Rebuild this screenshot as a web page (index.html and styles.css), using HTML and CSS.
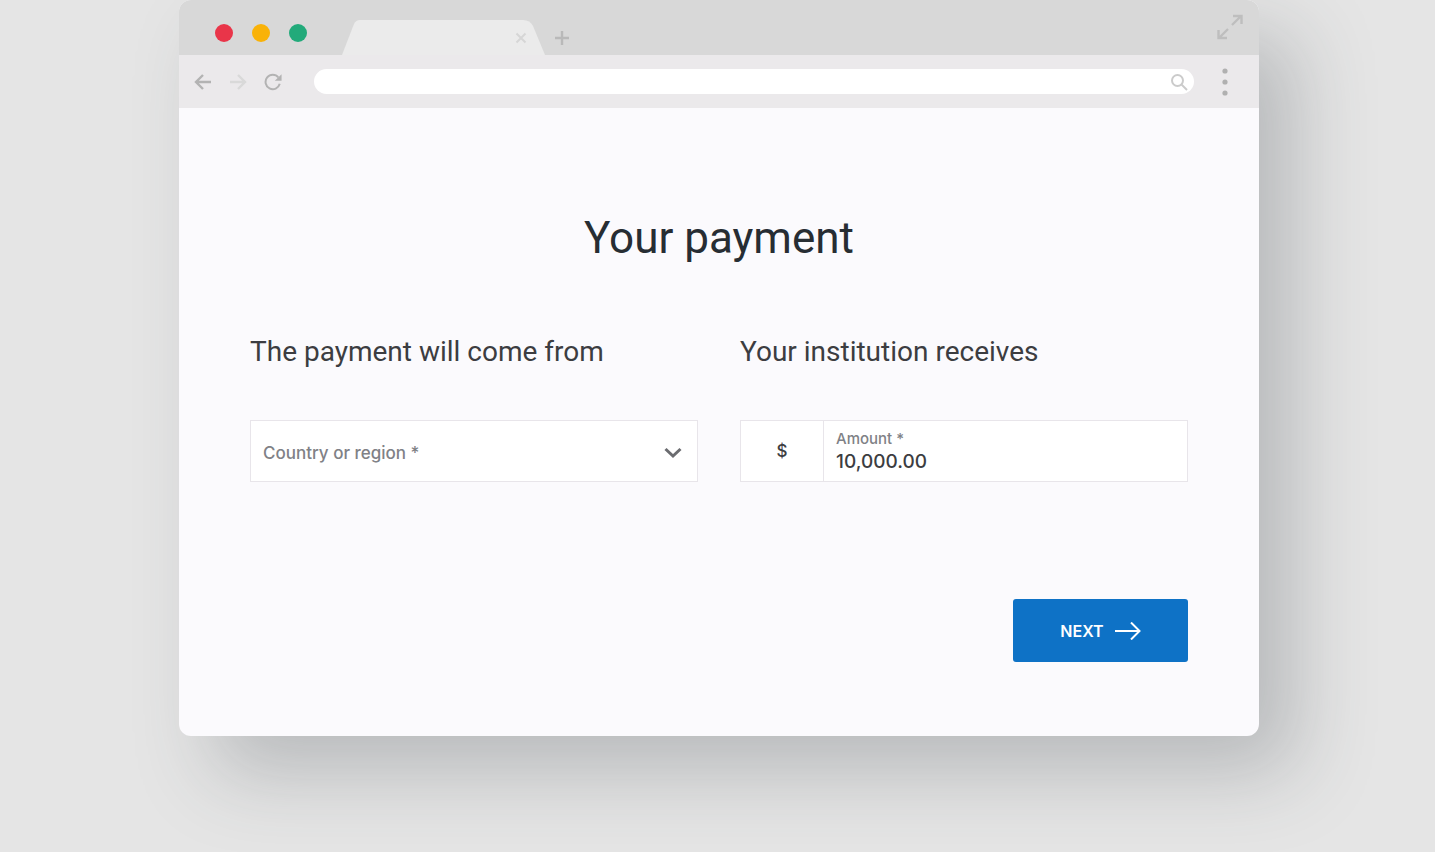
FILE: index.html
```html
<!DOCTYPE html>
<html lang="en">

<head>
    <meta charset="UTF-8">
    <meta name="viewport" content="width=device-width, initial-scale=1.0">
    <title>Your payment</title>
    <link rel="stylesheet" href="styles.css">
</head>

<body>
    <div class="browser">
        <header class="tab-bar">
            <div class="lights">
                <span class="light red"></span>
                <span class="light yellow"></span>
                <span class="light green"></span>
            </div>
            <div class="tab">
                <svg class="tab-shape" viewBox="0 0 203 35" preserveAspectRatio="none">
                    <path d="M0 35 L12 4 Q14 0 18 0 H181 Q188 0 191 6 L203 35 Z" fill="#ebebeb" />
                </svg>
                <button class="icon-btn tab-close" aria-label="Close tab">
                    <svg width="12" height="12" viewBox="0 0 12 12">
                        <path d="M1.5 1.5 L10.5 10.5 M10.5 1.5 L1.5 10.5" stroke="#d6d6d6" stroke-width="2" />
                    </svg>
                </button>
            </div>
            <button class="icon-btn new-tab" aria-label="New tab">
                <svg width="14" height="14" viewBox="0 0 14 14">
                    <path d="M7 0 V14 M0 7 H14" stroke="#b9b9b9" stroke-width="2.4" />
                </svg>
            </button>
            <button class="icon-btn expand" aria-label="Full screen">
                <svg width="26" height="26" viewBox="0 0 26 26" fill="none" stroke="#bebebe" stroke-width="2.4">
                    <path d="M15 11 L24 2 M16 2 H24.5 V10" />
                    <path d="M11 15 L2 24 M1.5 16 V24 H10" />
                </svg>
            </button>
        </header>

        <div class="toolbar">
            <div class="nav-buttons">
                <button class="icon-btn" aria-label="Back">
                    <svg width="18" height="16" viewBox="0 0 18 16" fill="none" stroke="#b3b3b3" stroke-width="2.4">
                        <path d="M17 8 H2 M9 1 L2 8 L9 15" />
                    </svg>
                </button>
                <button class="icon-btn" aria-label="Forward">
                    <svg width="18" height="16" viewBox="0 0 18 16" fill="none" stroke="#d9d9d9" stroke-width="2.4">
                        <path d="M1 8 H16 M9 1 L16 8 L9 15" />
                    </svg>
                </button>
                <button class="icon-btn" aria-label="Reload">
                    <svg width="18" height="18" viewBox="0 0 20 20">
                        <path d="M16 5 A8 8 0 1 0 17.5 12" fill="none" stroke="#b3b3b3" stroke-width="2.2" />
                        <path d="M19.5 1.5 V8.5 H12 Z" fill="#b3b3b3" />
                    </svg>
                </button>
            </div>
            <div class="address">
                <input type="text" aria-label="Address">
                <svg width="18" height="18" viewBox="0 0 18 18" fill="none" stroke="#cbcbcb" stroke-width="2">
                    <circle cx="7.5" cy="7.5" r="5.5" />
                    <path d="M11.5 11.5 L17 17" />
                </svg>
            </div>
            <button class="icon-btn menu" aria-label="Menu">
                <svg width="6" height="28" viewBox="0 0 6 28" fill="#b0b0b0">
                    <circle cx="3" cy="3" r="2.6" />
                    <circle cx="3" cy="14" r="2.6" />
                    <circle cx="3" cy="25" r="2.6" />
                </svg>
            </button>
        </div>

        <main class="content">
            <h1>Your payment</h1>
            <form>
                <div class="columns">
                    <section>
                        <h2>The payment will come from</h2>
                        <div class="field">
                            <label class="select-label" for="country">Country or region *</label>
                            <select id="country" required>
                                <option value=""></option>
                            </select>
                            <svg class="chevron" width="18" height="12" viewBox="0 0 18 12">
                                <path d="M1.5 2 L9 9 L16.5 2" fill="none" stroke="#6b6c70" stroke-width="3" />
                            </svg>
                        </div>
                    </section>
                    <section>
                        <h2>Your institution receives</h2>
                        <div class="field">
                            <span class="currency">$</span>
                            <div class="amount">
                                <label for="amount">Amount *</label>
                                <input type="text" id="amount" value="10,000.00" required>
                            </div>
                        </div>
                    </section>
                </div>
                <button class="next-btn" type="submit">
                    NEXT
                    <svg width="26" height="18" viewBox="0 0 26 18" fill="none" stroke="#fff" stroke-width="2">
                        <path d="M0 9 H24.5 M16 0.5 L24.5 9 L16 17.5" />
                    </svg>
                </button>
            </form>
        </main>
    </div>
</body>

</html>
```
FILE: styles.css
```css
* {
    margin: 0;
    padding: 0;
    box-sizing: border-box;
}

body {
    font-family: Roboto, "Liberation Sans", sans-serif;
    background: #e5e5e5;
    color: #3c3d41;
    padding: 0 176px 116px 179px;
}

button,
input,
select {
    font-family: inherit;
    border: none;
    background: none;
    outline: none;
}

svg {
    display: block;
}

/* browser window */
.browser {
    border-radius: 12px;
    background: #fbfafd;
    box-shadow: 36px 36px 80px rgba(54, 62, 68, 0.26);
}

.tab-bar {
    display: flex;
    align-items: flex-end;
    height: 55px;
    padding: 0 16px 0 36px;
    background: #d8d8d8;
    border-radius: 12px 12px 0 0;
}

.lights {
    display: flex;
    gap: 19px;
    margin-right: 35px;
    padding-bottom: 13px;
}

.light {
    width: 18px;
    height: 18px;
    border-radius: 50%;
}

.red {
    background: #e93549;
}

.yellow {
    background: #f9b208;
}

.green {
    background: #22aa7a;
}

.tab {
    position: relative;
    display: flex;
    align-items: center;
    justify-content: flex-end;
    width: 203px;
    height: 35px;
    padding-right: 18px;
}

.tab-shape {
    position: absolute;
    top: 0;
    left: 0;
    width: 100%;
    height: 100%;
}

.icon-btn {
    cursor: pointer;
}

.tab-close {
    position: relative;
}

.new-tab {
    margin-left: 10px;
    padding-bottom: 10px;
}

.expand {
    margin-left: auto;
    padding-bottom: 15px;
}

.toolbar {
    display: flex;
    align-items: center;
    height: 53px;
    padding: 0 31px 0 15px;
    background: #ebe9eb;
}

.nav-buttons {
    display: flex;
    align-items: center;
    gap: 17px;
    margin-right: 32px;
}

.address {
    display: flex;
    align-items: center;
    flex: 1;
    height: 25px;
    padding: 0 6px 0 14px;
    background: #fff;
    border-radius: 13px;
}

.address input {
    flex: 1;
    min-width: 0;
}

.menu {
    margin-left: 28px;
}

/* payment form */
.content {
    padding: 104px 71px 74px;
}

h1 {
    font-size: 44px;
    font-weight: 400;
    line-height: 52px;
    color: #272d33;
    text-align: center;
    margin-bottom: 71px;
}

.columns {
    display: grid;
    grid-template-columns: 1fr 1fr;
    gap: 42px;
    margin-bottom: 117px;
}

h2 {
    font-size: 28px;
    font-weight: 400;
    line-height: 34px;
    margin-bottom: 51px;
}

.field {
    position: relative;
    display: flex;
    height: 62px;
    font-family: Inter, Roboto, sans-serif;
    font-weight: 500;
    background: #fff;
    border: 1px solid #e8e5ea;
}

.field label {
    color: #808186;
}

.select-label {
    position: absolute;
    top: 20px;
    left: 12px;
    font-size: 17px;
    line-height: 24px;
    pointer-events: none;
}

.field select {
    width: 100%;
    padding: 0 12px;
    font-size: 17px;
    appearance: none;
    cursor: pointer;
}

.chevron {
    position: absolute;
    top: 26px;
    right: 15px;
    pointer-events: none;
}

.currency {
    display: flex;
    align-items: center;
    justify-content: center;
    width: 83px;
    font-size: 17px;
    border-right: 1px solid #e8e5ea;
}

.amount {
    display: flex;
    flex: 1;
    flex-direction: column;
    justify-content: center;
    padding: 0 12px;
}

.amount label {
    font-size: 15px;
    line-height: 20px;
}

.amount input {
    width: 100%;
    height: 24px;
    font-size: 19px;
    font-weight: 500;
    color: #3c3d41;
}

.next-btn {
    display: flex;
    align-items: center;
    justify-content: center;
    gap: 11px;
    width: 175px;
    height: 63px;
    margin-left: auto;
    font-family: Inter, Roboto, sans-serif;
    font-size: 16px;
    font-weight: 600;
    color: #fff;
    background: #0e72c6;
    border-radius: 3px;
    cursor: pointer;
}
```
